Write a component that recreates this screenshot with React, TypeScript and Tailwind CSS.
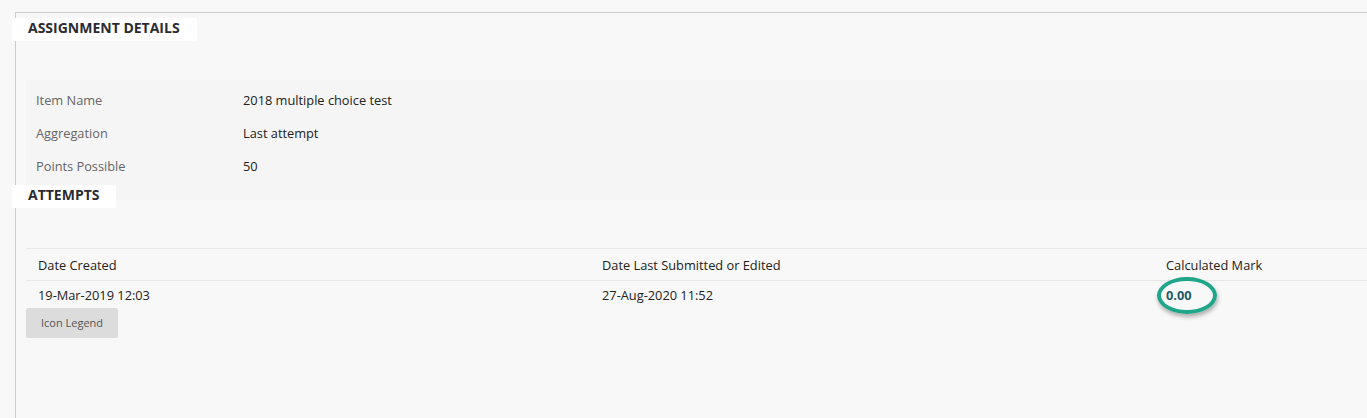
import React from 'react';

const details = [
  { label: 'Item Name', value: '2018 multiple choice test' },
  { label: 'Aggregation', value: 'Last attempt' },
  { label: 'Points Possible', value: '50' },
];

const SectionHeading: React.FC<{ title: string; width: string }> = ({ title, width }) => (
  <div className={`relative z-10 -ml-[4px] h-[23px] bg-white pl-4 ${width}`}>
    <h2 className="text-[14px] leading-[19px] font-bold uppercase text-[#2b2b33]">{title}</h2>
  </div>
);

const App: React.FC = () => {
  return (
    <div
      className="h-[418px] w-full overflow-hidden bg-[#f8f8f8] pt-3 pl-[15px]"
      style={{ fontFamily: '"Open Sans", "Noto Sans", sans-serif' }}
    >
      <div className="h-full border-l border-t border-[#cccccc]">
        {/* Assignment details */}
        <div className="pt-[5px]">
          <SectionHeading title="Assignment Details" width="w-[185px]" />
        </div>

        <div className="ml-[10px] mt-[39px] bg-[#f5f5f5] pt-[4px] pb-[17px]">
          {details.map(d => (
            <div key={d.label} className="flex h-[33px] items-center text-[12.8px]">
              <span className="w-[217px] pl-[10px] text-[#666666]">{d.label}</span>
              <span className="text-[#222222]">{d.value}</span>
            </div>
          ))}
        </div>

        {/* Attempts */}
        <div className="-mt-[15px]">
          <SectionHeading title="Attempts" width="w-[104px]" />
        </div>

        <div className="ml-[10px] mt-[40px]">
          <div className="grid h-[33px] grid-cols-[564px_564px_1fr] items-center border-t border-b border-[#e6e6e6] pl-3 pt-[2px] text-[12.8px] text-[#222222]">
            <span>Date Created</span>
            <span>Date Last Submitted or Edited</span>
            <span>Calculated Mark</span>
          </div>
          <div className="grid h-[27px] grid-cols-[564px_564px_1fr] items-center pl-3 pt-[2px] text-[12.8px] text-[#222222]">
            <span>19-Mar-2019 12:03</span>
            <span>27-Aug-2020 11:52</span>
            <span className="relative">
              <span className="font-bold text-[#1d5a6b]">0.00</span>
              <span className="absolute left-[-9px] top-[-9px] h-[37px] w-[60px] rounded-[50%] border-[4px] border-[#1fa58a] shadow-[1px_3px_4px_rgba(0,0,0,0.3)]" />
            </span>
          </div>
          <button className="h-[30px] w-[92px] rounded-[2px] bg-[#dcdcdc] text-[11px] text-[#555555]">
            Icon Legend
          </button>
        </div>
      </div>
    </div>
  );
};

export default App;
